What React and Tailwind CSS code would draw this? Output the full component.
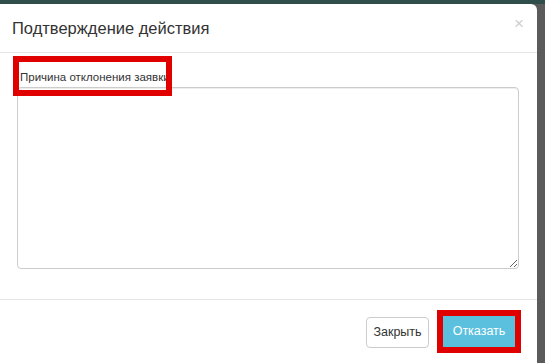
export default function App() {
  return (
    <div className="relative h-[363px] w-[545px] overflow-hidden bg-[#5b5b5b] font-['Liberation_Sans',Arial,sans-serif] text-[#333]">
      <div className="h-[4px] w-full bg-[#2f4d4b]" />
      <div className="flex h-[359px] w-[537px] flex-col rounded-tr-[6px] bg-white">
        <div className="flex h-[49px] items-center justify-between border-b border-[#e5e5e5] pl-[12px] pr-[13px]">
          <h4 className="text-[16.5px] leading-[20px] text-[#333]">Подтверждение действия</h4>
          <button className="-mt-[10px] text-[17px] leading-none text-[#cfcfcf]">×</button>
        </div>
        <div className="flex h-[246px] flex-col pl-[17px] pr-[18px] pt-[17px]">
          <label className="relative mb-[3px] ml-[3px] self-start text-[11.5px] leading-[14px] text-[#333]">
            <span className="pointer-events-none absolute -left-[7px] -top-[14px] h-[40px] w-[159px] border-[6px] border-[#e00000]" />
            Причина отклонения заявки
          </label>
          <textarea className="h-[182px] w-full resize-y rounded-[4px] border border-[#cccccc] px-[12px] py-[6px] text-[14px] shadow-[inset_0_1px_1px_rgba(0,0,0,0.075)] outline-none" />
        </div>
        <div className="flex flex-1 items-start justify-end gap-[8px] border-t border-[#e5e5e5] pr-[16px] pt-[10px]">
          <button className="mt-[7px] h-[31px] w-[63px] rounded-[4px] border border-[#cccccc] bg-white text-[12.5px] text-[#333]">Закрыть</button>
          <span className="border-[6px] border-[#e00000]">
            <button className="block h-[31px] w-[72px] bg-[#5bc0de] text-[12.5px] text-white">Отказать</button>
          </span>
        </div>
      </div>
    </div>
  );
}
